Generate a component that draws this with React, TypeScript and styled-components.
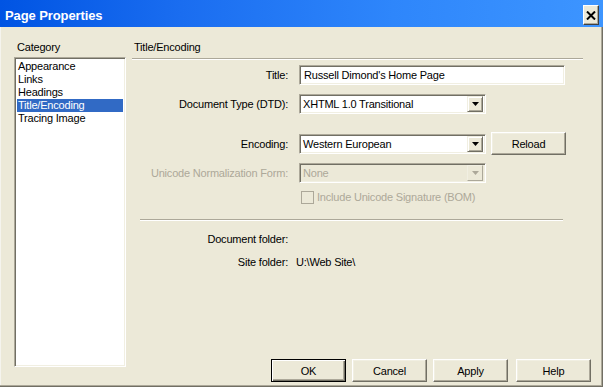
import styled, { createGlobalStyle } from "styled-components";

const GlobalStyle = createGlobalStyle`
  html, body {
    margin: 0;
    padding: 0;
    background: #ece9d8;
  }

  body {
    font-family: "Liberation Sans", Arial, sans-serif;
    font-size: 11px;
    letter-spacing: -0.2px;
    color: #000;
  }
`;

const Window = styled.div`
  width: 603px;
  height: 387px;
  box-sizing: border-box;
  display: flex;
  flex-direction: column;
  background: #ece9d8;
  box-shadow: inset -1px -1px #716f64, inset -2px -2px #aca899,
    inset 1px 1px #f5f4ee;
`;

const TitleBar = styled.div`
  height: 27px;
  flex: none;
  display: flex;
  align-items: flex-start;
  justify-content: space-between;
  background: linear-gradient(to right, #0054e3 0%, #1a6df0 30%, #2e86fb 65%, #3d95ff 100%);
  padding: 0 4px 0 5px;
`;

const Title = styled.span`
  margin-top: 8px;
  line-height: 15px;
  font-size: 13px;
  font-weight: bold;
  letter-spacing: -0.1px;
  color: #fff;
`;

const CloseButton = styled.button`
  margin-top: 5px;
  width: 16px;
  height: 20px;
  padding: 0;
  display: flex;
  align-items: center;
  justify-content: center;
  background: #ece9d8;
  border: 1px solid;
  border-color: #fff #404040 #404040 #fff;
  box-shadow: inset -1px -1px #aca899;
`;

const Body = styled.div`
  flex: 1;
  display: flex;
  padding: 14px 12px 5px 14px;
  min-height: 0;
`;

const Sidebar = styled.div`
  width: 112px;
  display: flex;
  flex-direction: column;
  margin-bottom: 15px;
`;

const Caption = styled.div<{ $indent: number }>`
  line-height: 13px;
  padding-left: ${(p) => p.$indent}px;
`;

const sunken = `
  box-sizing: border-box;
  border: 1px solid;
  border-color: #aca899 #fff #fff #aca899;
  box-shadow: inset 1px 1px #716f64, inset -1px -1px #f1efe2;
`;

const ListBox = styled.div`
  ${sunken}
  flex: 1;
  margin-top: 3px;
  padding: 2px;
  background: #fff;
`;

const ListItem = styled.div<{ $selected?: boolean }>`
  line-height: 13px;
  padding-left: 1px;
  background: ${(p) => (p.$selected ? "#316ac5" : "transparent")};
  color: ${(p) => (p.$selected ? "#fff" : "#000")};
`;

const Main = styled.div`
  flex: 1;
  display: flex;
  flex-direction: column;
  margin-left: 6px;
`;

const Separator = styled.div<{ $top: number; $left: number; $right: number }>`
  margin: ${(p) => p.$top}px ${(p) => p.$right}px 0 ${(p) => p.$left}px;
  border-top: 1px solid #aca899;
  border-bottom: 1px solid #fff;
`;

const Row = styled.div<{ $top: number }>`
  display: flex;
  align-items: center;
  margin-top: ${(p) => p.$top}px;
`;

const Label = styled.div<{ $disabled?: boolean }>`
  width: 156px;
  flex: none;
  text-align: right;
  line-height: 13px;
  color: ${(p) => (p.$disabled ? "#aca899" : "#000")};
`;

const Value = styled.div`
  margin-left: 8px;
  line-height: 13px;
`;

const TextBox = styled.div`
  ${sunken}
  margin-left: 11px;
  width: 266px;
  height: 20px;
  padding: 0 4px;
  display: flex;
  align-items: center;
  background: #fff;
`;

const Combo = styled.div<{ $disabled?: boolean }>`
  ${sunken}
  margin-left: 11px;
  width: 187px;
  height: 20px;
  padding: 2px;
  display: flex;
  align-items: center;
  background: ${(p) => (p.$disabled ? "#ece9d8" : "#fff")};
  color: ${(p) => (p.$disabled ? "#aca899" : "#000")};
`;

const ComboText = styled.span`
  flex: 1;
  padding-left: 1px;
`;

const DropButton = styled.div<{ $disabled?: boolean }>`
  width: 16px;
  height: 16px;
  box-sizing: border-box;
  display: flex;
  align-items: center;
  justify-content: center;
  background: #ece9d8;
  border: 1px solid;
  border-color: ${(p) =>
    p.$disabled ? "#f1efe2 #aca899 #aca899 #f1efe2" : "#f1efe2 #716f64 #716f64 #f1efe2"};
  box-shadow: ${(p) => (p.$disabled ? "none" : "inset 1px 1px #fff, inset -1px -1px #aca899")};
`;

const PushButton = styled.button<{ $default?: boolean }>`
  width: 75px;
  height: 23px;
  padding: 0;
  box-sizing: border-box;
  font-family: "Liberation Sans", Arial, sans-serif;
  font-size: 11px;
  letter-spacing: -0.2px;
  color: #000;
  background: #ece9d8;
  border: 1px solid;
  border-color: ${(p) => (p.$default ? "#000" : "#fff #716f64 #716f64 #fff")};
  box-shadow: ${(p) =>
    p.$default
      ? "inset 1px 1px #fff, inset -1px -1px #716f64, inset -2px -2px #aca899"
      : "inset -1px -1px #aca899, inset 1px 1px #f1efe2"};
`;

const ReloadButton = styled(PushButton)`
  margin-left: 5px;
  align-self: flex-start;
  margin-top: -1px;
`;

const CheckRow = styled.div`
  display: flex;
  align-items: center;
  margin-top: 8px;
  padding-left: 169px;
  color: #aca899;
  line-height: 13px;
`;

const CheckBox = styled.div`
  width: 13px;
  height: 13px;
  box-sizing: border-box;
  border: 1px solid #aca899;
  background: #ece9d8;
  margin-right: 3px;
`;

const Spacer = styled.div`
  flex: 1;
`;

const Footer = styled.div`
  display: flex;
  justify-content: flex-end;
  gap: 6px;
`;

const HelpButton = styled(PushButton)`
  margin-left: 2px;
`;

const Arrow = ({ color }: { color: string }) => (
  <svg width="7" height="4" viewBox="0 0 7 4">
    <polygon points="0,0 7,0 3.5,4" fill={color} />
  </svg>
);

export default function App() {
  const categories = ["Appearance", "Links", "Headings", "Title/Encoding", "Tracing Image"];

  return (
    <>
      <GlobalStyle />
      <Window>
        <TitleBar>
          <Title>Page Properties</Title>
          <CloseButton aria-label="Close">
            <svg width="10" height="9" viewBox="0 0 10 9">
              <path d="M1 0.5 L9 8.5 M9 0.5 L1 8.5" stroke="#000" strokeWidth="2" />
            </svg>
          </CloseButton>
        </TitleBar>
        <Body>
          <Sidebar>
            <Caption $indent={3}>Category</Caption>
            <ListBox>
              {categories.map((c) => (
                <ListItem key={c} $selected={c === "Title/Encoding"}>
                  {c}
                </ListItem>
              ))}
            </ListBox>
          </Sidebar>
          <Main>
            <Caption $indent={2}>Title/Encoding</Caption>
            <Separator $top={4} $left={0} $right={8} />

            <Row $top={5}>
              <Label>Title:</Label>
              <TextBox>Russell Dimond's Home Page</TextBox>
            </Row>

            <Row $top={9}>
              <Label>Document Type (DTD):</Label>
              <Combo>
                <ComboText>XHTML 1.0 Transitional</ComboText>
                <DropButton>
                  <Arrow color="#000" />
                </DropButton>
              </Combo>
            </Row>

            <Row $top={19}>
              <Label>Encoding:</Label>
              <Combo>
                <ComboText>Western European</ComboText>
                <DropButton>
                  <Arrow color="#000" />
                </DropButton>
              </Combo>
              <ReloadButton>Reload</ReloadButton>
            </Row>

            <Row $top={8}>
              <Label $disabled>Unicode Normalization Form:</Label>
              <Combo $disabled>
                <ComboText>None</ComboText>
                <DropButton $disabled>
                  <Arrow color="#aca899" />
                </DropButton>
              </Combo>
            </Row>

            <CheckRow>
              <CheckBox />
              Include Unicode Signature (BOM)
            </CheckRow>

            <Separator $top={15} $left={8} $right={28} />

            <Row $top={12}>
              <Label>Document folder:</Label>
            </Row>
            <Row $top={10}>
              <Label>Site folder:</Label>
              <Value>U:\Web Site\</Value>
            </Row>

            <Spacer />
            <Footer>
              <PushButton $default>OK</PushButton>
              <PushButton>Cancel</PushButton>
              <PushButton>Apply</PushButton>
              <HelpButton>Help</HelpButton>
            </Footer>
          </Main>
        </Body>
      </Window>
    </>
  );
}
